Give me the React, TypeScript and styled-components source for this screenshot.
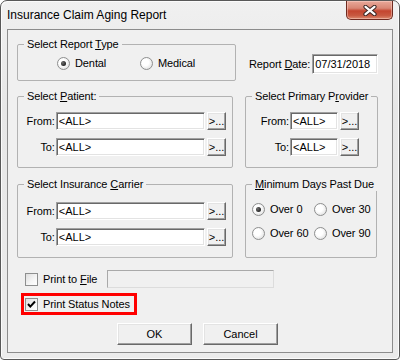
import styled, { createGlobalStyle } from 'styled-components';

const GlobalStyle = createGlobalStyle`
  html, body {
    margin: 0;
    padding: 0;
    background: #fff;
  }
  body {
    font-family: 'Liberation Sans', Arial, sans-serif;
    font-size: 11px;
    letter-spacing: -0.1px;
    color: #000;
  }
`;

const Key = ({ children }: { children: string }) => <u>{children}</u>;

const RadioOption = ({ label, checked, width }: { label: string; checked?: boolean; width: number }) => (
  <Option $w={width}>
    <RadioDot $on={checked} />
    <span>{label}</span>
  </Option>
);

const PickRow = ({ label, labelWidth, boxWidth }: { label: string; labelWidth: number; boxWidth: number }) => (
  <FieldRow>
    <FieldLabel $w={labelWidth}>{label}</FieldLabel>
    <TextBox $w={boxWidth} readOnly defaultValue="<ALL>" />
    <PushButton $w={19} $h={18} $ml={2}>&gt;...</PushButton>
  </FieldRow>
);

const CloseGlyph = () => (
  <svg width="14" height="11" viewBox="0 0 14 11">
    <path d="M2.5 1.8 L11.5 9.2 M11.5 1.8 L2.5 9.2" stroke="#3a2623" strokeWidth="4.2" strokeLinecap="round" />
    <path d="M2.5 1.8 L11.5 9.2 M11.5 1.8 L2.5 9.2" stroke="#fff" strokeWidth="2.2" strokeLinecap="round" />
  </svg>
);

export default function App() {
  return (
    <>
      <GlobalStyle />
      <Window>
        <TitleBar>
          <Title>Insurance Claim Aging Report</Title>
          <CloseButton aria-label="Close"><CloseGlyph /></CloseButton>
        </TitleBar>
        <Client>
          <Row $gap={13}>
            <Group $w={219} $h={43}>
              <Legend>Select Report <Key>T</Key>ype</Legend>
              <Options $top={6} $left={33}>
                <RadioOption label="Dental" checked width={83} />
                <RadioOption label="Medical" width={70} />
              </Options>
            </Group>
            <DateField>
              <span>Report <Key>D</Key>ate:</span>
              <TextBox $w={66} $h={20} readOnly defaultValue="07/31/2018" />
            </DateField>
          </Row>

          <Row $gap={12} $top={9}>
            <Group $w={216} $h={78}>
              <Legend>Select <Key>P</Key>atient:</Legend>
              <FieldRows $top={9}>
                <PickRow label="From:" labelWidth={31} boxWidth={150} />
                <PickRow label="To:" labelWidth={31} boxWidth={150} />
              </FieldRows>
            </Group>
            <Group $w={133} $h={78}>
              <Legend>Select Primary P<Key>r</Key>ovider</Legend>
              <FieldRows $top={9}>
                <PickRow label="From:" labelWidth={37} boxWidth={48} />
                <PickRow label="To:" labelWidth={37} boxWidth={48} />
              </FieldRows>
            </Group>
          </Row>

          <Row $gap={12} $top={10}>
            <Group $w={216} $h={80}>
              <Legend>Select Insurance <Key>C</Key>arrier</Legend>
              <FieldRows $top={11}>
                <PickRow label="From:" labelWidth={31} boxWidth={150} />
                <PickRow label="To:" labelWidth={31} boxWidth={150} />
              </FieldRows>
            </Group>
            <Group $w={132} $h={80}>
              <Legend><Key>M</Key>inimum Days Past Due</Legend>
              <DaysGrid>
                <RadioOption label="Over 0" checked width={62} />
                <RadioOption label="Over 30" width={62} />
                <RadioOption label="Over 60" width={62} />
                <RadioOption label="Over 90" width={62} />
              </DaysGrid>
            </Group>
          </Row>

          <CheckRow $top={9}>
            <CheckBox />
            <CheckLabel $w={59}>Print to <Key>F</Key>ile</CheckLabel>
            <FileBox />
          </CheckRow>
          <CheckRow $top={2} $marked>
            <CheckBox>
              <svg width="9" height="9" viewBox="0 0 9 9">
                <polyline points="1,4 3.3,6.6 8,1.5" fill="none" stroke="#000" strokeWidth="2" />
              </svg>
            </CheckBox>
            <CheckLabel>Print Status Notes</CheckLabel>
          </CheckRow>

          <Buttons>
            <PushButton $w={75} $h={22}>OK</PushButton>
            <PushButton $w={75} $h={22}>Cancel</PushButton>
          </Buttons>
        </Client>
      </Window>
    </>
  );
}

const Window = styled.div`
  box-sizing: border-box;
  width: 400px;
  height: 360px;
  display: flex;
  flex-direction: column;
  padding: 0 6px 6px;
  border: 1px solid #585858;
  border-radius: 7px 7px 4px 4px;
  background: linear-gradient(180deg, #f0f0f0 0%, #e7e7e7 30%, #ebebeb 100%);
  box-shadow: inset 1px 1px 0 #fbfbfb, inset -1px -1px 0 #fbfbfb;
`;

const TitleBar = styled.div`
  height: 28px;
  display: flex;
  justify-content: space-between;
  align-items: flex-start;
`;

const Title = styled.div`
  margin-top: 7px;
  font-size: 12px;
  line-height: 15px;
  letter-spacing: 0;
`;

const CloseButton = styled.div`
  box-sizing: border-box;
  width: 47px;
  height: 19px;
  display: flex;
  align-items: center;
  justify-content: center;
  border: 1px solid #6e2a20;
  border-top: none;
  border-radius: 0 0 5px 5px;
  background: linear-gradient(180deg, #e9a99a 0%, #d88674 40%, #c4452f 55%, #c85840 80%, #dc8a6f 100%);
  box-shadow: inset 0 0 0 1px rgba(255, 220, 210, 0.45);
`;

const Client = styled.div`
  flex: 1;
  display: flex;
  flex-direction: column;
  padding: 8px 14px 0 9px;
  border: 1px solid #8c8c8c;
  background: #f0f0f0;
`;

const Row = styled.div<{ $gap: number; $top?: number }>`
  display: flex;
  align-items: flex-start;
  gap: ${(p) => p.$gap}px;
  margin-top: ${(p) => p.$top ?? 0}px;
`;

const Group = styled.fieldset<{ $w: number; $h: number }>`
  box-sizing: border-box;
  flex-shrink: 0;
  width: ${(p) => p.$w}px;
  height: ${(p) => p.$h}px;
  min-width: 0;
  margin: 0;
  padding: 0 6px;
  border: 1px solid #b2b2b2;
  border-radius: 2px;
`;

const Legend = styled.legend`
  padding: 0 3px;
  line-height: 13px;
  white-space: nowrap;
`;

const Options = styled.div<{ $top: number; $left: number }>`
  display: flex;
  padding: ${(p) => p.$top}px 0 0 ${(p) => p.$left}px;
`;

const Option = styled.div<{ $w: number }>`
  width: ${(p) => p.$w}px;
  display: flex;
  align-items: center;
  gap: 5px;
  line-height: 13px;
  white-space: nowrap;
`;

const RadioDot = styled.span<{ $on?: boolean }>`
  box-sizing: border-box;
  width: 13px;
  height: 13px;
  flex-shrink: 0;
  display: flex;
  align-items: center;
  justify-content: center;
  border: 1px solid #8e8f8f;
  border-radius: 50%;
  background: radial-gradient(circle at 40% 40%, #ffffff 35%, #e8e8e8 70%, #cfcfcf 100%);
  &::after {
    content: '';
    width: 5px;
    height: 5px;
    border-radius: 50%;
    background: ${(p) => (p.$on ? 'radial-gradient(circle at 35% 35%, #707070, #050505)' : 'transparent')};
  }
`;

const DateField = styled.div`
  margin-top: 16px;
  display: flex;
  align-items: center;
  gap: 2px;
  white-space: nowrap;
  flex-shrink: 0;
`;

const FieldRows = styled.div<{ $top: number }>`
  display: flex;
  flex-direction: column;
  gap: 8px;
  padding-top: ${(p) => p.$top}px;
`;

const FieldRow = styled.div`
  display: flex;
  align-items: center;
`;

const FieldLabel = styled.span<{ $w: number }>`
  width: ${(p) => p.$w}px;
  margin-right: 1px;
  text-align: right;
  white-space: nowrap;
`;

const TextBox = styled.input<{ $w: number; $h?: number }>`
  box-sizing: border-box;
  width: ${(p) => p.$w}px;
  height: ${(p) => p.$h ?? 18}px;
  margin: 0;
  padding: 0 0 0 2px;
  font: inherit;
  color: #000;
  background: #fff;
  border: 1px solid;
  border-color: #a0a0a0 #fff #fff #a0a0a0;
  box-shadow: inset 1px 1px 0 #696969, inset -1px -1px 0 #e3e3e3;
  outline: none;
`;

const PushButton = styled.button<{ $w: number; $h: number; $ml?: number }>`
  box-sizing: border-box;
  flex-shrink: 0;
  width: ${(p) => p.$w}px;
  height: ${(p) => p.$h}px;
  margin: 0 0 0 ${(p) => p.$ml ?? 0}px;
  padding: 0;
  font: inherit;
  color: #000;
  background: #f0f0f0;
  border: 1px solid;
  border-color: #fff #696969 #696969 #fff;
  box-shadow: inset -1px -1px 0 #a0a0a0, inset 1px 1px 0 #e3e3e3;
`;

const DaysGrid = styled.div`
  display: grid;
  grid-template-columns: 62px 62px;
  row-gap: 11px;
  padding-top: 12px;
`;

const CheckRow = styled.div<{ $top: number; $marked?: boolean }>`
  align-self: flex-start;
  display: flex;
  align-items: center;
  gap: 5px;
  margin: ${(p) => p.$top}px 0 0 4px;
  padding: 0 4px 0 1px;
  min-height: 16px;
  border: 3px solid ${(p) => (p.$marked ? '#ff0000' : 'transparent')};
  line-height: 13px;
  white-space: nowrap;
`;

const CheckBox = styled.span`
  box-sizing: border-box;
  width: 13px;
  height: 13px;
  flex-shrink: 0;
  display: flex;
  align-items: center;
  justify-content: center;
  border: 1px solid #8e8f8f;
  background: linear-gradient(135deg, #dedede 0%, #f6f6f6 60%, #ffffff 100%);
`;

const CheckLabel = styled.span<{ $w?: number }>`
  width: ${(p) => (p.$w ? `${p.$w}px` : 'auto')};
`;

const FileBox = styled.div`
  box-sizing: border-box;
  width: 167px;
  height: 18px;
  border: 1px solid;
  border-color: #a9a9a9 #dcdcdc #dcdcdc #a9a9a9;
  background: #f0f0f0;
`;

const Buttons = styled.div`
  display: flex;
  justify-content: center;
  gap: 11px;
  margin-top: 8px;
`;
